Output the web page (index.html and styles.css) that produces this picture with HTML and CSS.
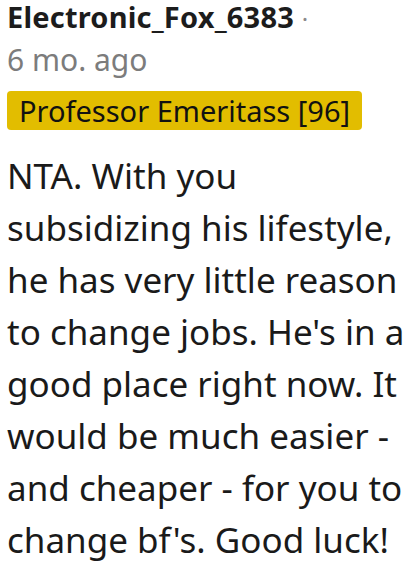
FILE: index.html
```html
<!DOCTYPE html>
<html>
<head>
<meta charset="utf-8">
<link rel="stylesheet" href="styles.css">
</head>
<body>
<div class="comment">
  <div class="meta">
    <div class="author-line"><span class="author">Electronic_Fox_6383</span> <span class="dot">·</span></div>
    <div class="time">6 mo. ago</div>
    <div class="flair-row"><span class="flair">Professor Emeritass [96]</span></div>
  </div>
  <p class="body">NTA. With you subsidizing his lifestyle, he has very little reason to change jobs. He's in a good place right now. It would be much easier - and cheaper - for you to change bf's. Good luck!</p>
</div>
</body>
</html>
```
FILE: styles.css
```css
html, body { margin: 0; padding: 0; background: #fff; }
.comment { padding: 0 2px 0 7px; font-family: "Noto Sans", sans-serif; color: #1a1a1b; }
.meta { display: flex; flex-direction: column; }
.author-line { font-size: 29px; line-height: 34px; white-space: nowrap; letter-spacing: 0.2px; }
.author { font-weight: 700; color: #1c1c1c; }
.dot { color: #8a8a8a; font-size: 24px; }
.time { font-size: 30px; line-height: 48px; color: #7c7c7c; }
.flair-row { margin-top: 7px; }
.flair { display: inline-block; background: #e2bd00; color: #111; font-size: 29px; line-height: 39px; padding: 0 12px; border-radius: 4px; }
.body { margin: 20px 0 0; font-size: 35px; line-height: 52px; color: #1a1a1a; }
```
